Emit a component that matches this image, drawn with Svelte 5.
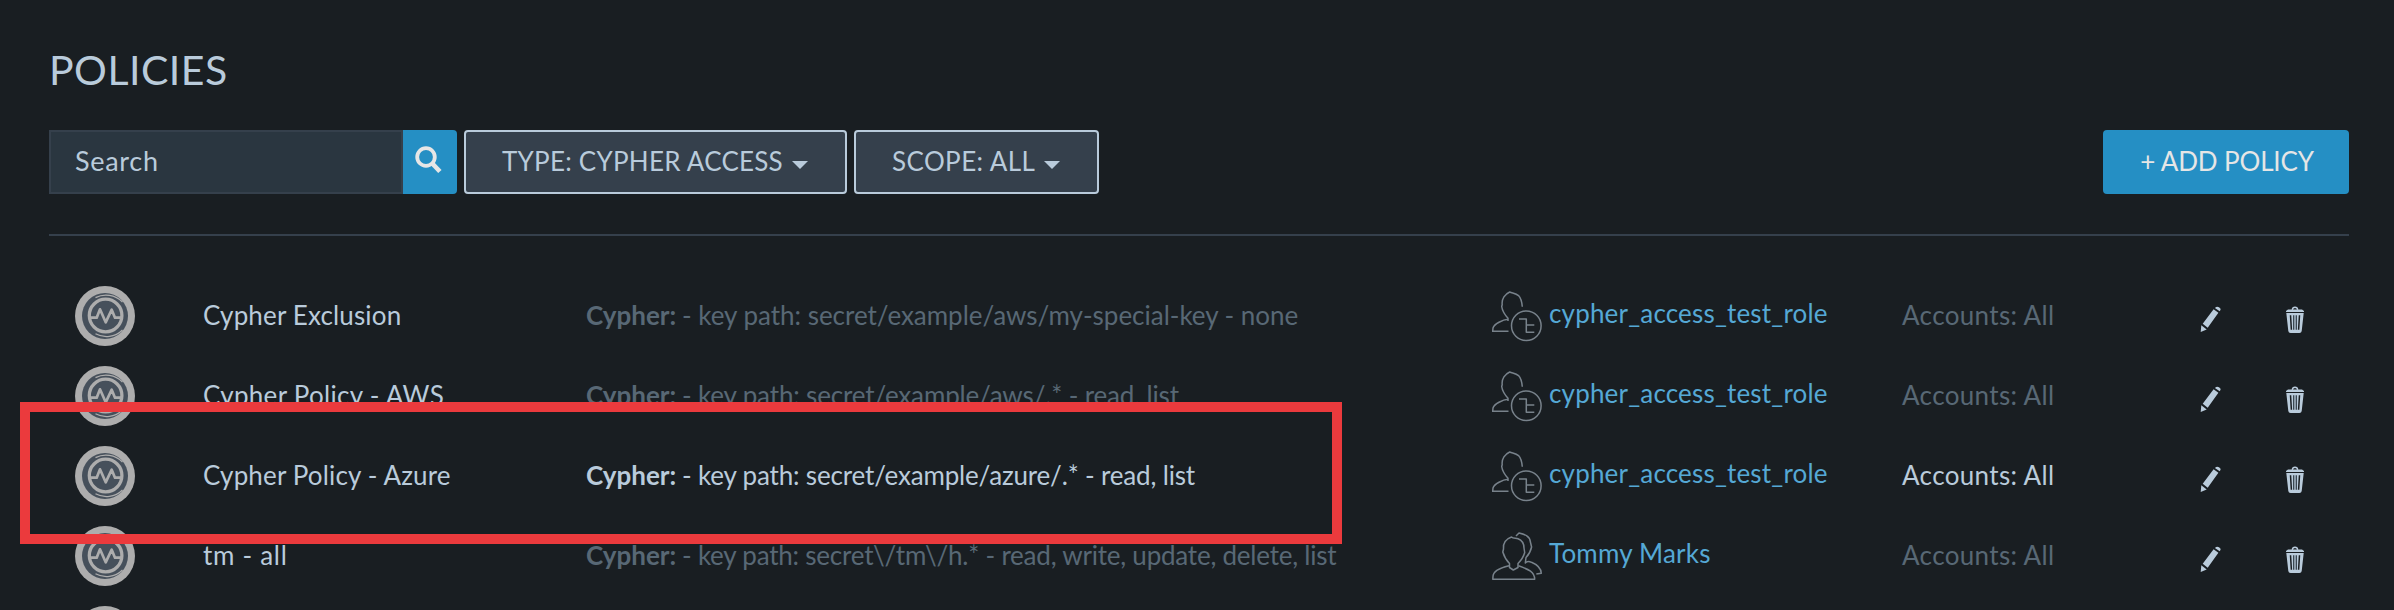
<script>
  const role = { name: 'cypher_access_test_role', kind: 'role', track: 0.18 };
  const policies = [
    { name: 'Cypher Exclusion', nameTrack: 0.15, detail: '- key path: secret/example/aws/my-special-key - none', track: -0.02, owner: role },
    { name: 'Cypher Policy - AWS', nameTrack: 0.3, detail: '- key path: secret/example/aws/.* - read, list', track: -0.15, owner: role },
    { name: 'Cypher Policy - Azure', nameTrack: 0.15, detail: '- key path: secret/example/azure/.* - read, list', track: -0.17, owner: role, active: true },
    { name: 'tm - all', nameTrack: 0.7, detail: '- key path: secret\\/tm\\/h.* - read, write, update, delete, list', track: -0.22, owner: { name: 'Tommy Marks', kind: 'user', track: 0.2 } }
  ];
</script>

{#snippet cypherIcon()}
  <svg class="cypher" width="60" height="60" viewBox="0 0 60 60">
    <circle cx="30" cy="30" r="30" fill="#adadad" />
    <circle cx="30" cy="30" r="23" fill="#46505b" />
    <g fill="none" stroke="#adadad">
      <path d="M20.5 11.6C29 7.2 40 8.4 47.5 16" stroke-width="1.3" />
      <path d="M20.5 47.8C29 52.4 40 51.4 47.5 44" stroke-width="1.3" />
      <circle cx="30.6" cy="29.5" r="16.3" stroke-width="3.3" />
      <path d="M15 31.7h6.7L25 23.3l5.7 13 6-12.6 3.3 8h6.5" stroke-width="2.7" stroke-linejoin="round" />
    </g>
  </svg>
{/snippet}

<main>
  <h1>POLICIES</h1>
  <div class="toolbar">
    <div class="search"><span>Search</span></div>
    <button class="go" aria-label="Search">
      <svg width="28" height="30" viewBox="0 0 28 30" fill="none" stroke="#e6e6e6">
        <circle cx="11" cy="12" r="8.8" stroke-width="3.8" />
        <path d="M17.3 18.5l7.6 8" stroke-width="4.6" />
      </svg>
    </button>
    <button class="filter type">TYPE: CYPHER ACCESS<i></i></button>
    <button class="filter scope">SCOPE: ALL<i></i></button>
    <button class="add">+ ADD POLICY</button>
  </div>

  <section>
    {#each policies as p}
      <div class="row" class:active={p.active}>
        {@render cypherIcon()}
        <div class="name" style="letter-spacing:{p.nameTrack}px">{p.name}</div>
        <div class="detail"><b>Cypher:</b><span style="letter-spacing:{p.track}px">{p.detail}</span></div>
        <div class="owner">
          <svg width="52" height="52" viewBox="0 0 52 52" fill="none" stroke="#78828b" stroke-width="1.5" stroke-linejoin="round">
            {#if p.owner.kind === 'role'}
              <path d="M30.3 16.7C29.8 11 28.8 8 26.5 5.6 24 3.4 20.5 3.2 17.7 2 13 4 9.5 9 10.2 14.5L9.7 16.5C10.5 22 13 25 16 28.3V31M16 29.3C11 29.6 2 34 1 38L.7 41.3H16.5" />
              <circle cx="34.3" cy="35.7" r="14.8" />
              <path d="M27 29h7.3v13.3h8M34.3 35h8" />
            {:else}
              <path d="M19.5 7C14 9 10.8 13 11.5 19L10.8 22C12 26 14 30 17.5 33.5V37.5L21.3 40 26 37.5V33.5C29.5 30 31.5 27 32.7 22.5L32 18C32 13 29.5 10 26 8.7 23.5 8 21 8.5 19.5 7Z" />
              <path d="M17 35.8C10 37.5 1 41 1 46.5L.8 49.3H42.7C42.5 42 37 39.5 26.5 35.8" />
              <path d="M24 6L27 3C33 4.5 38 6 38.4 12L39.6 17C38.5 22 36 25.5 34 27.5L33.3 33C35 31 37 31 39.5 32.3 46 35 49 38 49.3 43.3L44.3 44" />
            {/if}
          </svg>
          <a href="#owner" style="letter-spacing:{p.owner.track}px">{p.owner.name}</a>
        </div>
        <div class="accounts">Accounts: All</div>
        <svg class="edit" width="22" height="27" viewBox="0 0 22 27" fill="#b9cbdb">
          <path d="M.7 26L1.3 19.3 6.7 23.6ZM2.7 17.8L13.6 3.2 18.4 6.7 7.7 21.7ZM14.9 2L16.2.9Q17.5.2 19 1.3 21 2.6 20.6 3.8L19.7 5.2Z" />
        </svg>
        <svg class="trash" width="20" height="27" viewBox="0 0 20 27">
          <path d="M7.3 3.8Q7.6 1.3 10 1.3T12.7 3.8" fill="none" stroke="#b9cbdb" stroke-width="1.4" />
          <path d="M1 6V4.9L3 3.5H17L19 4.9V6ZM1.3 7H18.7L16.7 25Q16.4 27 14.5 27H5.5Q3.6 27 3.3 25Z" fill="#b9cbdb" />
          <path d="M5.5 9.3l.9 14.5M14.5 9.3l-.9 14.5" stroke="#1a1f23" stroke-width="1.5" />
          <path d="M8.7 9.3v14.5M11.3 9.3v14.5" stroke="#36424c" stroke-width="1.3" />
        </svg>
      </div>
    {/each}
    <div class="row">{@render cypherIcon()}</div>
    <div class="highlight"></div>
  </section>
</main>

<style>
  :global(body) { background: #191e22; overflow: hidden; }
  main {
    box-sizing: border-box; height: 610px; overflow: hidden; padding: 42px 45px 0 49px;
    background: #191e22; color: #b9cbdb; font: 26px/32px Lato, sans-serif; position: relative;
  }
  h1 { margin: 0 0 32px; font-size: 41px; line-height: 56px; font-weight: 400; letter-spacing: .5px; }
  .toolbar { display: flex; height: 64px; padding-bottom: 40px; border-bottom: 2px solid #35404c; }
  button { border: 0; margin: 0; padding: 0; font: inherit; color: inherit; box-sizing: border-box; }
  .search {
    box-sizing: border-box; width: 354px; border: 2px solid #35404c; background: #2a3640;
    padding: 13px 24px; font-size: 27px; letter-spacing: .7px;
  }
  .go {
    display: flex; align-items: flex-start; width: 54px; background: #258fc4;
    border-radius: 0 4px 4px 0; padding: 15px 0 0 12px; margin-right: 7px;
  }
  .go svg, .row svg { display: block; flex: none; }
  .filter {
    display: flex; align-items: center; background: #35404c; border: 2px solid #b9cbdb; border-radius: 4px;
    padding: 0 0 3px 36px; white-space: nowrap;
  }
  .type { width: 383px; margin-right: 7px; letter-spacing: .25px; }
  .scope { width: 245px; letter-spacing: .4px; }
  .filter i { border: 8px solid transparent; border-top-color: #b9cbdb; border-bottom: 0; margin: 8px 0 0 9px; }
  .add { margin-left: auto; width: 246px; background: #258fc4; color: #e6e6e6; border-radius: 4px; padding: 0 0 3px 2px; letter-spacing: -.15px; }
  section { padding-top: 40px; }
  .row {
    display: grid; grid-template-columns: 128px 383px 906px 410px 298px 85px 20px;
    height: 80px; align-items: center; padding-left: 26px; box-sizing: border-box; white-space: nowrap;
  }
  .name, .accounts, .detail { padding-bottom: 2px; }
  .accounts { letter-spacing: .35px; }
  .detail { display: flex; gap: 6px; }
  .detail, .accounts { color: #586875; }
  .detail b { font-weight: 700; width: 90px; }
  .active .detail, .active .accounts { color: #b9cbdb; }
  .owner { display: flex; align-items: center; gap: 5px; }
  .owner a { color: #55a8d5; text-decoration: none; padding-bottom: 6px; }
  .edit, .trash { margin-top: 7px; }
  .highlight { position: absolute; left: 20px; top: 402px; width: 1302px; height: 122px; border: 10px solid #eb3a3d; }
</style>
